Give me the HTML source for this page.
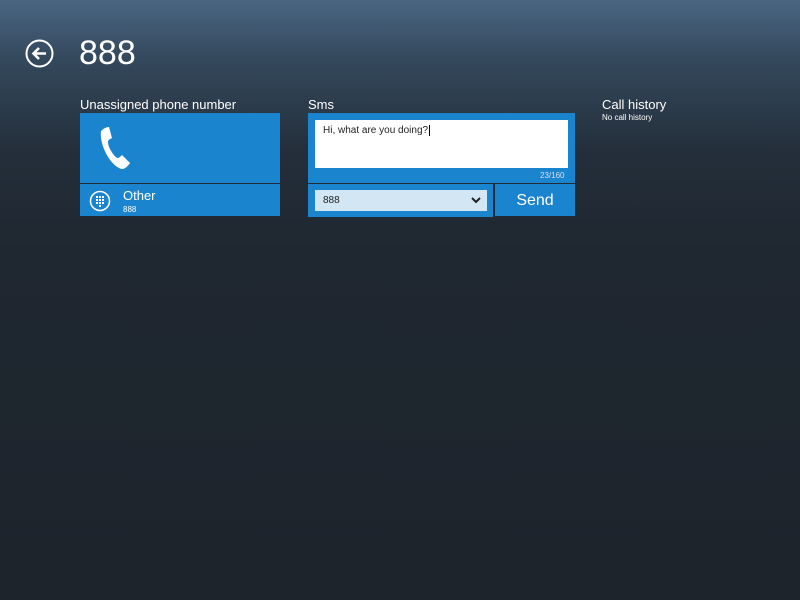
<!DOCTYPE html>
<html><head><style>
body{margin:0;width:800px;height:600px;overflow:hidden;font-family:"Liberation Sans",sans-serif;color:#fff;
background:linear-gradient(#4a6682 0px,#34485c 60px,#242f3b 150px,#1f2730 250px,#1d242c 600px);position:relative}
.a{position:absolute}
.blue{background:#1a84cf}
</style></head><body>
<svg class="a" style="left:25px;top:39px" width="29" height="29" viewBox="0 0 29 29"><circle cx="14.5" cy="14.5" r="13" fill="none" stroke="#fff" stroke-width="2"/><path d="M21 14.5H9M14 9l-5.5 5.5L14 20" fill="none" stroke="#fff" stroke-width="2.6"/></svg>
<div class="a" style="left:79px;top:34px;font-size:34px;font-weight:300;letter-spacing:0px">888</div>
<div class="a" style="left:80px;top:97px;font-size:13px">Unassigned phone number</div>
<div class="a blue" style="left:80px;top:113px;width:200px;height:70px"></div>
<svg class="a" style="left:97px;top:125px" width="34" height="48" viewBox="0 0 34 48"><path d="M4 6c3-3 6-4 8-4l3 11c-2 1-4 2-4 4 0 5 5 13 9 16 2 0 3-1 5-3l8 8c-2 3-5 6-8 6C14 42 2 20 4 6z" fill="#fff"/></svg>
<div class="a blue" style="left:80px;top:184px;width:200px;height:32px"></div>
<svg class="a" style="left:89px;top:190px" width="22" height="22" viewBox="0 0 22 22"><circle cx="11" cy="11" r="9.5" fill="none" stroke="#fff" stroke-width="1.5"/><g fill="#fff"><rect x="7" y="6" width="2" height="2"/><rect x="10" y="6" width="2" height="2"/><rect x="13" y="6" width="2" height="2"/><rect x="7" y="9" width="2" height="2"/><rect x="10" y="9" width="2" height="2"/><rect x="13" y="9" width="2" height="2"/><rect x="7" y="12" width="2" height="2"/><rect x="10" y="12" width="2" height="2"/><rect x="13" y="12" width="2" height="2"/><rect x="10" y="15" width="2" height="2"/></g></svg>
<div class="a" style="left:123px;top:188px;font-size:13px">Other</div>
<div class="a" style="left:123px;top:205px;font-size:8px">888</div>
<div class="a" style="left:308px;top:97px;font-size:13px">Sms</div>
<div class="a blue" style="left:308px;top:113px;width:267px;height:70px"></div>
<div class="a" style="left:315px;top:120px;width:253px;height:48px;background:#fff;color:#222;font-size:10px"><div style="padding:5px 0 0 8px">Hi, what are you doing?<span style="border-left:1px solid #000;margin-left:1px"></span></div></div>
<div class="a" style="left:540px;top:171px;font-size:8px;color:#dde">23/160</div>
<div class="a blue" style="left:308px;top:184px;width:185px;height:33px"></div>
<div class="a" style="left:315px;top:190px;width:172px;height:21px;background:#d2e6f3;color:#222;font-size:10px"><span style="position:absolute;left:8px;top:5px">888</span><svg style="position:absolute;right:6px;top:7px" width="10" height="7"><path d="M1 1l4 4 4-4" fill="none" stroke="#222" stroke-width="2"/></svg></div>
<div class="a blue" style="left:495px;top:184px;width:80px;height:32px;font-size:16px;text-align:center;line-height:33px">Send</div>
<div class="a" style="left:602px;top:97px;font-size:13px">Call history</div>
<div class="a" style="left:602px;top:113px;font-size:8px">No call history</div>
</body></html>
